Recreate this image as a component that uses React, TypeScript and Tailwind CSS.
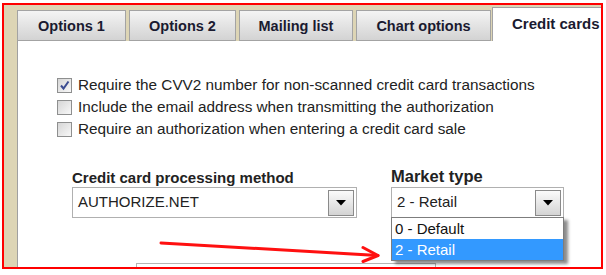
import React from "react";

const tabs = [
  { label: "Options 1", w: "w-[109px]" },
  { label: "Options 2", w: "w-[107px]" },
  { label: "Mailing list", w: "w-[114px]" },
  { label: "Chart options", w: "w-[135px]" },
];

const checks = [
  { label: "Require the CVV2 number for non-scanned credit card transactions", on: true },
  { label: "Include the email address when transmitting the authorization", on: false },
  { label: "Require an authorization when entering a credit card sale", on: false },
];

function Box({ on }: { on: boolean }) {
  return (
    <span className="w-[15px] h-[15px] shrink-0 border border-[#8e8f8f] bg-linear-to-br from-[#d6d6d6] to-[#f8f8f8] flex items-center justify-center">
      {on && (
        <svg width="11" height="11" viewBox="0 0 11 11">
          <path d="M2 5.5 L4.5 8.5 L9.5 1.5" fill="none" stroke="#3b4c91" strokeWidth="2" />
        </svg>
      )}
    </span>
  );
}

function DropButton() {
  return (
    <span className="w-[26px] h-[26px] mr-[2px] shrink-0 border border-[#8a8a8a] bg-linear-to-b from-[#fbfbfb] to-[#d4d4d4] flex items-center justify-center">
      <svg width="10" height="6" viewBox="0 0 10 6">
        <polygon points="0,0 10,0 5,5.5" fill="#000" />
      </svg>
    </span>
  );
}

export default function App() {
  return (
    <div className="relative w-[606px] h-[275px] bg-white overflow-hidden font-['Liberation_Sans',Arial,sans-serif]">
      <div className="ml-[2px] mt-[3px] w-[601px] h-[266px] border-2 border-[#ff0000] bg-[#ddd5b5] flex overflow-hidden">
        <div className="w-[13px] shrink-0" />
        <div className="flex-1 flex flex-col">
          {/* tab strip */}
          <div className="h-[36px] shrink-0 flex items-end gap-[3px]">
            {tabs.map((t) => (
              <div
                key={t.label}
                className={`${t.w} h-[31px] shrink-0 border border-[#a3a3a3] bg-linear-to-b from-[#f4f4f4] to-[#d3d3d3] flex justify-center pt-[7px] text-[14.5px] leading-[17px] font-bold text-[#1a1a30]`}
              >
                {t.label}
              </div>
            ))}
            <div className="-ml-[2px] flex-1 h-[34px] border-l border-t border-[#a3a3a3] bg-white pl-[19px] pt-[7px] text-[15px] leading-[17px] font-bold text-[#1a1a30] whitespace-nowrap">
              Credit cards
            </div>
          </div>

          {/* panel */}
          <div className="flex-1 bg-white border-l border-[#a0a0a0] pt-[33px] text-[#222]">
            <div className="pl-[39px]">
              {checks.map((c) => (
                <div key={c.label} className="h-[22px] flex items-center gap-[6px] text-[15.3px] leading-[18px] whitespace-nowrap">
                  <Box on={c.on} />
                  <span>{c.label}</span>
                </div>
              ))}
            </div>

            <div className="mt-[26px] pl-[54px] flex items-end gap-[34px]">
              <div className="w-[285px] flex flex-col">
                <div className="text-[15px] leading-[18px] font-bold">Credit card processing method</div>
                <div className="h-[31px] border border-[#b0b0b0] bg-white flex items-center pl-[5px] text-[15px]">
                  <span className="flex-1">AUTHORIZE.NET</span>
                  <DropButton />
                </div>
              </div>
              <div className="w-[173px] flex flex-col">
                <div className="mb-[1px] text-[16.5px] leading-[20px] font-bold">Market type</div>
                <div className="relative z-10 h-[31px] border border-[#b0b0b0] bg-white flex items-center pl-[5px] text-[15px]">
                  <span className="flex-1">2 - Retail</span>
                  <DropButton />
                  <div className="absolute left-[-1px] right-[-1px] top-full border border-[#7d7d7d] bg-white shadow-[4px_3px_3px_rgba(0,0,0,0.45)] text-[15px] leading-[21px]">
                    <div className="pl-[3px] text-[#111]">0 - Default</div>
                    <div className="pl-[3px] bg-[#3399ff] text-white">2 - Retail</div>
                  </div>
                </div>
              </div>
            </div>

            <div className="mt-[45px] ml-[118px] w-[300px] h-[20px] border border-[#b4b4b4]" />
          </div>
        </div>
      </div>

      {/* annotation arrow */}
      <svg className="absolute inset-0 pointer-events-none z-20" width="606" height="275" viewBox="0 0 606 275">
        <line x1="161" y1="243" x2="378" y2="255.5" stroke="#ff1010" strokeWidth="3" strokeLinecap="round" />
        <polyline points="363,247.5 378,255.5 363,261.5" fill="none" stroke="#ff1010" strokeWidth="3" strokeLinecap="round" strokeLinejoin="round" />
      </svg>
    </div>
  );
}
